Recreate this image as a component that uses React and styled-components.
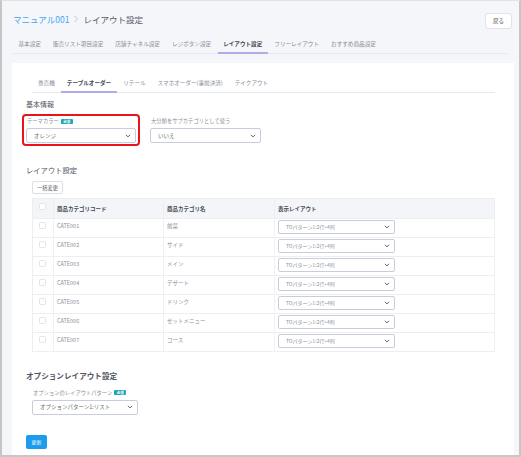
import styled, { createGlobalStyle } from 'styled-components'

const GlobalStyle = createGlobalStyle`
  html, body {
    margin: 0;
    padding: 0;
    background: #ffffff;
  }
  body {
    font-family: 'Noto Sans CJK JP', 'Noto Sans', sans-serif;
  }
`

const Frame = styled.div`
  width: 521px;
  height: 457px;
  box-sizing: border-box;
  border: 2px solid #c6c6c6;
  border-top: 1px solid #e2e2e2;
  background: #f5f6fa;
  overflow: hidden;
  display: flex;
  flex-direction: column;
`

const Header = styled.div`
  display: flex;
  justify-content: space-between;
  align-items: flex-start;
  padding: 11px 7px 0 11px;
`

const Breadcrumb = styled.div`
  display: flex;
  align-items: center;
  gap: 4px;
  height: 14px;
  font-size: 8.5px;
  color: #555a66;
`

const Crumb = styled.span`
  color: #46a6ea;
`

const BackButton = styled.button`
  margin-top: 1px;
  width: 27px;
  height: 16px;
  padding: 0;
  border: 1px solid #e1e3ea;
  border-radius: 3px;
  background: #ffffff;
  font-family: inherit;
  font-size: 5.5px;
  color: #555;
`

const TabBar = styled.div`
  display: flex;
  align-items: stretch;
  height: 17px;
  margin: 7px 12px 0 11px;
  border-bottom: 1px solid #e6e8ef;
  gap: ${({ $gap }) => $gap}px;
`

const Tab = styled.div`
  display: flex;
  align-items: center;
  padding: 0 ${({ $pad }) => $pad}px;
  font-size: 5.6px;
  color: ${({ $active }) => ($active ? '#444a57' : '#8a8e99')};
  font-weight: ${({ $active }) => ($active ? 700 : 400)};
  border-bottom: 2px solid ${({ $active }) => ($active ? '#b2abe8' : 'transparent')};
  margin-bottom: -1px;
  white-space: nowrap;
`

const Card = styled.div`
  flex: 1;
  margin: 9px 5px 0 10px;
  padding: 12px 19px 0 14px;
  background: #ffffff;
  display: flex;
  flex-direction: column;
`

const SubTabBar = styled(TabBar)`
  margin: 0 0 0 6px;
  height: 17px;
`

const Heading = styled.div`
  font-size: ${({ $size }) => $size}px;
  font-weight: ${({ $bold }) => ($bold ? 700 : 400)};
  line-height: 10px;
  color: #505561;
  margin-top: ${({ $top }) => $top}px;
`

const FormRow = styled.div`
  display: flex;
  gap: 6px;
  margin: 5px 0 0 -4px;
`

const FieldBox = styled.div`
  display: flex;
  flex-direction: column;
  padding: 1.5px 2px 1px 2px;
  border: 2px solid ${({ $highlight }) => ($highlight ? '#e8141b' : 'transparent')};
  border-radius: 4px;
`

const Label = styled.div`
  display: flex;
  align-items: center;
  gap: 2px;
  height: 7px;
  padding-left: 1px;
  font-size: 5.3px;
  color: #8a8e99;
  margin-bottom: 3.5px;
  white-space: nowrap;
`

const Badge = styled.span`
  display: inline-flex;
  align-items: center;
  justify-content: center;
  width: 12px;
  height: 5px;
  border-radius: 1px;
  background: #1da6b6;
  color: #ffffff;
  font-size: 3.5px;
  font-weight: 700;
`

const SelectBox = styled.div`
  box-sizing: border-box;
  display: flex;
  align-items: center;
  justify-content: space-between;
  width: ${({ $w }) => $w}px;
  height: ${({ $h }) => $h || 15}px;
  padding: 0 4px 0 ${({ $pl }) => $pl || 7}px;
  border: 1px solid #c9ccdb;
  border-radius: 2px;
  background: #ffffff;
  font-size: ${({ $fs }) => $fs || 5.5}px;
  color: ${({ $color }) => $color || '#6a6e79'};
  white-space: nowrap;
`

const SmallButton = styled.button`
  align-self: flex-start;
  margin: 6px 0 0 6px;
  width: 31px;
  height: 13px;
  padding: 0;
  border: 1px solid #dcdfe8;
  border-radius: 2px;
  background: #ffffff;
  font-family: inherit;
  font-size: 5.2px;
  color: #555;
`

const Table = styled.table`
  margin: 4px 0 0 6px;
  width: 463px;
  border-collapse: collapse;
  table-layout: fixed;
  font-size: 5.5px;
  border: 1px solid #eceef3;
`

const Th = styled.th`
  height: 19px;
  padding: 0 0 0 3px;
  background: #f4f5f8;
  border-right: 1px solid #eceef3;
  text-align: left;
  font-weight: 700;
  color: #444955;
  vertical-align: middle;
`

const Td = styled.td`
  height: 19px;
  box-sizing: border-box;
  padding: ${({ $pt }) => $pt}px 0 0 3px;
  border-right: 1px solid #eff1f5;
  border-top: 1px solid #eceef3;
  color: #8c909a;
  vertical-align: top;
  line-height: 8px;
`

const Check = styled.div`
  box-sizing: border-box;
  width: 7px;
  height: 7px;
  margin-left: 3px;
  margin-top: ${({ $top }) => $top || 0}px;
  border: 1px solid #e2e4ea;
  border-radius: 1.5px;
  background: #ffffff;
`

const OptionField = styled.div`
  display: flex;
  flex-direction: column;
  margin: 8px 0 0 6px;
`

const PrimaryButton = styled.button`
  align-self: flex-start;
  margin-top: 20px;
  width: 21px;
  height: 14px;
  padding: 0;
  border: none;
  border-radius: 2px;
  background: #1b9cec;
  color: #ffffff;
  font-family: inherit;
  font-size: 5px;
`

function Chevron({ size = 6, color = '#555' }) {
  return (
    <svg width={size} height={size} viewBox="0 0 10 10">
      <polyline
        points="2,3.5 5,6.5 8,3.5"
        fill="none"
        stroke={color}
        strokeWidth="1.6"
        strokeLinecap="round"
        strokeLinejoin="round"
      />
    </svg>
  )
}

function Select({ value, width, ...rest }) {
  return (
    <SelectBox $w={width} {...rest}>
      <span>{value}</span>
      <Chevron />
    </SelectBox>
  )
}

const mainTabs = [
  '基本設定',
  '販売リスト項目設定',
  '店舗チャネル設定',
  'レジボタン設定',
  'レイアウト設定',
  'フリーレイアウト',
  'おすすめ商品設定',
]

const subTabs = ['券売機', 'テーブルオーダー', 'リテール', 'スマホオーダー(事前決済)', 'テイクアウト']

const categories = [
  ['CATE001', '前菜'],
  ['CATE002', 'サイド'],
  ['CATE003', 'メイン'],
  ['CATE004', 'デザート'],
  ['CATE005', 'ドリンク'],
  ['CATE006', 'セットメニュー'],
  ['CATE007', 'コース'],
]

export default function App() {
  return (
    <>
      <GlobalStyle />
      <Frame>
        <Header>
          <Breadcrumb>
            <Crumb>マニュアル001</Crumb>
            <svg width="6" height="8" viewBox="0 0 6 8">
              <polyline points="1.5,1 4.5,4 1.5,7" fill="none" stroke="#b5b8c0" strokeWidth="0.8" />
            </svg>
            <span>レイアウト設定</span>
          </Breadcrumb>
          <BackButton>戻る</BackButton>
        </Header>

        <TabBar $gap={1}>
          {mainTabs.map(t => (
            <Tab key={t} $pad={5.5} $active={t === 'レイアウト設定'}>
              {t}
            </Tab>
          ))}
        </TabBar>

        <Card>
          <SubTabBar $gap={0}>
            {subTabs.map(t => (
              <Tab key={t} $pad={6} $active={t === 'テーブルオーダー'}>
                {t}
              </Tab>
            ))}
          </SubTabBar>

          <Heading $size={7} $top={6}>基本情報</Heading>
          <FormRow>
            <FieldBox $highlight>
              <Label>
                テーマカラー<Badge>必須</Badge>
              </Label>
              <Select value="オレンジ" width={110} />
            </FieldBox>
            <FieldBox>
              <Label>大分類をサブカテゴリとして使う</Label>
              <Select value="いいえ" width={111} />
            </FieldBox>
          </FormRow>

          <Heading $size={7.3} $top={19}>レイアウト設定</Heading>
          <SmallButton>一括変更</SmallButton>
          <Table>
            <colgroup>
              <col style={{ width: '21px' }} />
              <col style={{ width: '110px' }} />
              <col style={{ width: '111px' }} />
              <col />
            </colgroup>
            <thead>
              <tr>
                <Th>
                  <Check $top={-4} />
                </Th>
                <Th>商品カテゴリコード</Th>
                <Th>商品カテゴリ名</Th>
                <Th>表示レイアウト</Th>
              </tr>
            </thead>
            <tbody>
              {categories.map(([code, name]) => (
                <tr key={code}>
                  <Td $pt={3}>
                    <Check />
                  </Td>
                  <Td $pt={3}>{code}</Td>
                  <Td $pt={3}>{name}</Td>
                  <Td $pt={1}>
                    <Select
                      value="TOパターン1:2行+4列"
                      width={117}
                      $h={14}
                      $fs={5}
                      $pl={7}
                      $color="#8c909a"
                    />
                  </Td>
                </tr>
              ))}
            </tbody>
          </Table>

          <Heading $size={7.6} $top={19} $bold>
            オプションレイアウト設定
          </Heading>
          <OptionField>
            <Label>
              オプションのレイアウトパターン<Badge>必須</Badge>
            </Label>
            <Select value="オプションパターン1:リスト" width={106} $pl={7} />
          </OptionField>

          <PrimaryButton>更新</PrimaryButton>
        </Card>
      </Frame>
    </>
  )
}
